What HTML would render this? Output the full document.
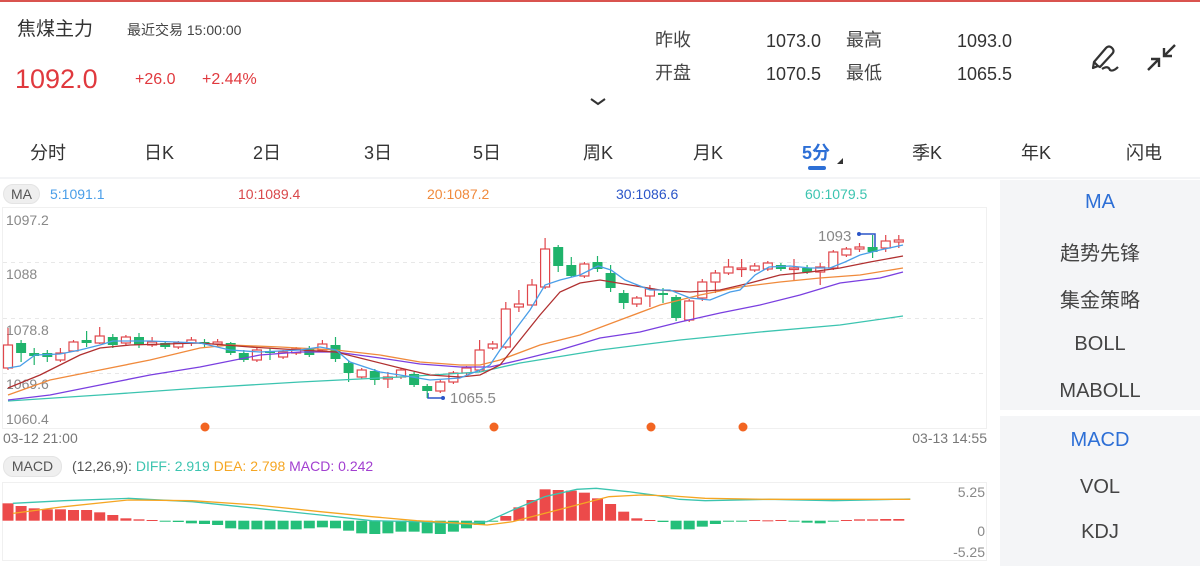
<!DOCTYPE html>
<html><head><meta charset="utf-8"><style>
*{margin:0;padding:0;box-sizing:border-box}
body{width:1200px;height:568px;overflow:hidden;background:#fff;font-family:"Liberation Sans","Noto Sans CJK SC",sans-serif;position:relative;color:#333}
.a{position:absolute;white-space:nowrap;line-height:1}
.tab{position:absolute;top:139px;font-size:18px;color:#333;transform:translateX(-50%)}
.rp{position:absolute;left:1000px;width:200px;background:#f4f5f7}
.ri{position:absolute;left:0;width:200px;text-align:center;font-size:20px;color:#444}
</style></head><body>
<div style="position:absolute;left:0;top:0;width:1200px;height:2px;background:#d9534f"></div>
<div class="a" style="left:17px;top:20px;font-size:19px;color:#333">焦煤主力</div>
<div class="a" style="left:127px;top:23px;font-size:14px;color:#444">最近交易 15:00:00</div>
<div class="a" style="left:15px;top:66px;font-size:27px;color:#e0393e">1092.0</div>
<div class="a" style="left:135px;top:72px;font-size:16px;color:#e0393e">+26.0</div>
<div class="a" style="left:202px;top:72px;font-size:16px;color:#e0393e">+2.44%</div>
<div class="a" style="left:655px;top:31px;font-size:18px;color:#444">昨收</div>
<div class="a" style="left:766px;top:32px;font-size:18px;color:#333">1073.0</div>
<div class="a" style="left:846px;top:31px;font-size:18px;color:#444">最高</div>
<div class="a" style="left:957px;top:32px;font-size:18px;color:#333">1093.0</div>
<div class="a" style="left:655px;top:64px;font-size:18px;color:#444">开盘</div>
<div class="a" style="left:766px;top:65px;font-size:18px;color:#333">1070.5</div>
<div class="a" style="left:846px;top:64px;font-size:18px;color:#444">最低</div>
<div class="a" style="left:957px;top:65px;font-size:18px;color:#333">1065.5</div>
<svg style="position:absolute;left:588px;top:96px" width="20" height="12"><path d="M3 3 L10 8 L17 3" stroke="#333" stroke-width="2" fill="none"/></svg>
<svg style="position:absolute;left:1088px;top:40px" width="36" height="36"><path d="M10 26 L6 22 L18 8 Q21 5 24 8 Q27 11 24 14 L12 27 Z M6 22 L5 28 L10 26" stroke="#333" stroke-width="2.2" fill="none" stroke-linejoin="round"/><path d="M14 29 Q20 25 22 30 Q25 32 30 27" stroke="#333" stroke-width="2.2" fill="none"/></svg>
<svg style="position:absolute;left:1144px;top:40px" width="36" height="36"><path d="M31 5 L21 15 M20 8 L20 16 L28 16" stroke="#333" stroke-width="2.4" fill="none"/><path d="M4 30 L14 20 M7 19 L15 19 L15 27" stroke="#333" stroke-width="2.4" fill="none"/></svg>
<div class="tab" style="left:48px">分时</div><div class="tab" style="left:159px">日K</div><div class="tab" style="left:267px">2日</div><div class="tab" style="left:378px">3日</div><div class="tab" style="left:487px">5日</div><div class="tab" style="left:598px">周K</div><div class="tab" style="left:708px">月K</div><div class="tab" style="left:816px;color:#2d6fd6;font-weight:bold">5分</div><div class="tab" style="left:927px">季K</div><div class="tab" style="left:1036px">年K</div><div class="tab" style="left:1144px">闪电</div>
<div style="position:absolute;left:808px;top:166px;width:18px;height:4px;border-radius:2px;background:#2d6fd6"></div>
<svg style="position:absolute;left:836px;top:157px" width="8" height="8"><path d="M7 1 L7 7 L1 7Z" fill="#333"/></svg>
<div style="position:absolute;left:0;top:177px;width:1200px;height:2px;background:#f3f4f6"></div>
<div class="a" style="left:3px;top:184px;width:37px;height:20px;border-radius:10px;background:#efefef;border:1px solid #e4e4e4;font-size:14px;color:#555;text-align:center;line-height:18px">MA</div>
<div class="a" style="left:50px;top:187px;font-size:14px;color:#4a9ee8">5:1091.1</div>
<div class="a" style="left:238px;top:187px;font-size:14px;color:#d9484a">10:1089.4</div>
<div class="a" style="left:427px;top:187px;font-size:14px;color:#f08a3c">20:1087.2</div>
<div class="a" style="left:616px;top:187px;font-size:14px;color:#2a55c8">30:1086.6</div>
<div class="a" style="left:805px;top:187px;font-size:14px;color:#3cc4b0">60:1079.5</div>
<svg id="k" style="position:absolute;left:0;top:0" width="1000" height="568">
<rect x="2.5" y="207.5" width="984" height="221" fill="none" stroke="#f0f0f0"/>
<g stroke="#e8e8e8" stroke-dasharray="4,4"><line x1="3" y1="262.5" x2="985" y2="262.5"/><line x1="3" y1="318.5" x2="985" y2="318.5"/><line x1="3" y1="373.5" x2="985" y2="373.5"/></g>
<g font-family="Liberation Sans" font-size="14" fill="#888"><text x="6" y="225">1097.2</text><text x="6" y="279">1088</text><text x="6" y="335">1078.8</text><text x="6" y="389">1069.6</text><text x="6" y="424">1060.4</text>
<text x="3" y="443" fill="#777">03-12 21:00</text><text x="987" y="443" fill="#777" text-anchor="end">03-13 14:55</text>
<text x="450" y="403" fill="#888" font-size="15">1065.5</text><text x="818" y="241" font-size="15">1093</text></g>
<path d="M428 393 L428 398 L443 398" stroke="#2a55c8" fill="none" stroke-width="1.5"/><circle cx="443" cy="398" r="2" fill="#2a55c8"/>
<path d="M859 234 L875 234 L875 247" stroke="#2a55c8" fill="none" stroke-width="1.5"/><circle cx="859" cy="234" r="2" fill="#2a55c8"/>
<g fill="#f26522"><circle cx="205" cy="427" r="4.5"/><circle cx="494" cy="427" r="4.5"/><circle cx="651" cy="427" r="4.5"/><circle cx="743" cy="427" r="4.5"/></g>
<g id="cd"></g>
<g fill="none" stroke-width="1.3">
<polyline stroke="#3cc4b0" points="8,401 100,395 200,388 300,382 400,377 480,372 520,363 600,350 680,340 760,332 840,325 903,316"/>
<polyline stroke="#7a3fe0" points="8,400 50,395 100,385 150,375 200,367 260,355 300,352 336,352 380,358 420,364 460,367 490,367 520,360 560,350 600,338 640,332 680,322 720,313 760,305 800,295 840,283 880,278 903,272"/>
<polyline stroke="#f08a3c" points="8,395 50,380 100,370 150,360 200,348 230,345 280,347 336,350 380,355 420,362 460,365 480,365 500,360 540,345 580,335 620,320 660,305 700,295 740,287 780,282 820,278 860,275 903,268"/>
<polyline stroke="#b03030" points="8,388 40,375 80,355 100,348 130,345 200,343 250,347 300,350 336,352 360,358 400,368 430,375 460,377 480,375 500,365 520,340 540,315 560,292 580,283 600,280 630,285 660,290 690,292 720,290 750,283 780,275 810,272 840,268 870,262 903,256"/>
<polyline stroke="#4a9ee8" points="8,368 20,366 35,355 60,354 80,350 100,345 113,341 150,341 200,343 230,350 260,352 300,350 320,347 336,350 350,362 380,372 400,375 430,380 460,378 480,370 490,365 500,350 515,330 530,310 545,285 560,280 580,275 598,266 611,270 625,280 650,290 670,290 690,298 710,300 730,292 740,290 755,275 769,267 790,266 810,268 830,268 845,262 860,255 880,250 903,245"/>
</g>
<rect x="2.5" y="482.5" width="984" height="78" fill="none" stroke="#f0f0f0"/>
<g id="hist"></g>
<g fill="none" stroke-width="1.3">
<polyline id="diff" stroke="#3cc4b0"/><polyline id="dea" stroke="#f5a623"/>
</g>
<g font-family="Liberation Sans" font-size="14" fill="#888" text-anchor="end"><text x="985" y="497">5.25</text><text x="985" y="536">0</text><text x="985" y="557">-5.25</text></g>
</svg>
<div class="a" style="left:3px;top:456px;width:59px;height:21px;border-radius:10px;background:#efefef;border:1px solid #e4e4e4;font-size:14px;color:#555;text-align:center;line-height:19px">MACD</div>
<div class="a" style="left:72px;top:459px;font-size:14px;color:#555">(12,26,9): <span style="color:#3cc4b0">DIFF: 2.919</span> <span style="color:#f5a623">DEA: 2.798</span> <span style="color:#a23fd0">MACD: 0.242</span></div>
<div class="rp" style="top:180px;height:230px">
<div class="ri" style="top:11px;color:#2d6fd6">MA</div><div class="ri" style="top:57px">趋势先锋</div><div class="ri" style="top:104px">集金策略</div><div class="ri" style="top:153px">BOLL</div><div class="ri" style="top:200px">MABOLL</div></div>
<div class="rp" style="top:416px;height:150px">
<div class="ri" style="top:13px;color:#2d6fd6">MACD</div><div class="ri" style="top:60px">VOL</div><div class="ri" style="top:105px">KDJ</div></div>
<script>
var C=[[345,368,328,370,1],[343,353,340,362,0],[353,356,348,365,0],[353,357,350,362,0],[353,360,348,362,1],[342,351,340,352,1],[340,343,331,347,0],[336,343,327,344,1],[337,345,334,348,0],[337,343,335,345,1],[337,345,333,348,0],[342,345,337,347,1],[343,347,341,349,0],[343,347,341,349,1],[340,343,337,346,1],[342,344,339,347,0],[342,344,339,346,1],[343,353,342,355,0],[353,360,350,362,0],[350,360,348,362,1],[351,353,348,360,0],[352,357,350,359,1],[349,353,347,355,1],[348,355,346,357,0],[344,350,340,352,1],[345,359,337,362,0],[363,373,361,382,0],[370,377,368,379,1],[371,380,369,385,0],[377,379,372,388,1],[370,377,368,379,1],[374,385,372,387,0],[386,391,384,398,0],[382,391,380,393,1],[373,382,371,384,1],[368,373,366,375,1],[350,370,340,372,1],[344,348,341,350,1],[309,347,302,349,1],[304,307,290,312,1],[285,305,279,307,1],[249,287,238,289,1],[247,266,245,272,0],[265,276,257,277,0],[264,276,262,278,1],[262,269,256,272,0],[273,288,265,292,0],[293,303,290,309,0],[298,304,296,307,1],[289,296,285,307,1],[293,295,288,303,0],[297,318,295,321,0],[301,320,299,322,1],[282,298,279,301,1],[273,282,270,293,1],[267,273,259,275,1],[268,269,259,277,1],[266,270,263,272,1],[263,269,261,271,1],[265,269,263,271,0],[268,269,259,280,1],[268,272,265,274,0],[267,272,263,285,1],[252,268,250,270,1],[249,255,247,257,1],[247,249,243,252,1],[247,252,235,258,0],[241,248,235,252,1],[240,242,235,248,1]];
var H=[160,168,175,178,178,180,180,187,195,205,208,210,214,216,220,222,225,235,238,238,238,238,238,235,232,235,242,250,252,250,245,245,250,252,245,235,225,214,198,172,150,118,120,122,128,145,162,185,205,210,216,238,238,230,222,215,214,210,211,210,214,218,220,214,210,208,208,207,207];
var g=document.getElementById('cd'),h=document.getElementById('hist'),s='',t='';
for(var i=0;i<C.length;i++){var x=8+i*13.1,c=C[i],col=c[4]?'#e0464b':'#1fb36b';
s+='<line x1="'+x+'" x2="'+x+'" y1="'+c[2]+'" y2="'+c[3]+'" stroke="'+col+'" stroke-width="1.2"/>';
var hh=Math.max(c[1]-c[0],1.5);
if(c[4])s+='<rect x="'+(x-4.5)+'" y="'+c[0]+'" width="9" height="'+hh+'" fill="#fff" stroke="'+col+'" stroke-width="1.2"/>';
else s+='<rect x="'+(x-5)+'" y="'+c[0]+'" width="10" height="'+hh+'" fill="'+col+'"/>';
var v=450+H[i]/3,b=520.7,up=v<b;
t+='<rect x="'+(x-5.5)+'" y="'+Math.min(v,b)+'" width="11" height="'+Math.max(Math.abs(v-b),1)+'" fill="'+(up?'#ec4a4a':'#25bf7a')+'"/>';}
g.innerHTML=s;h.innerHTML=t;
function P(a){return a.map(function(p){return (p[0]/1.56)+','+(450+p[1]/3)}).join(' ')}
document.getElementById('diff').setAttribute('points',P([[20,160],[100,152],[200,145],[300,155],[400,175],[500,195],[580,212],[650,215],[720,222],[760,215],[800,180],[850,140],[900,118],[930,115],[980,125],[1020,135],[1060,148],[1100,152],[1200,148],[1300,152],[1420,147]]));
document.getElementById('dea').setAttribute('points',P([[20,190],[100,170],[200,150],[300,152],[400,165],[500,185],[580,200],[650,212],[720,220],[760,225],[800,215],[860,185],[900,165],[950,140],[1000,135],[1050,138],[1100,145],[1200,148],[1420,148]]));
</script>
</body></html>
